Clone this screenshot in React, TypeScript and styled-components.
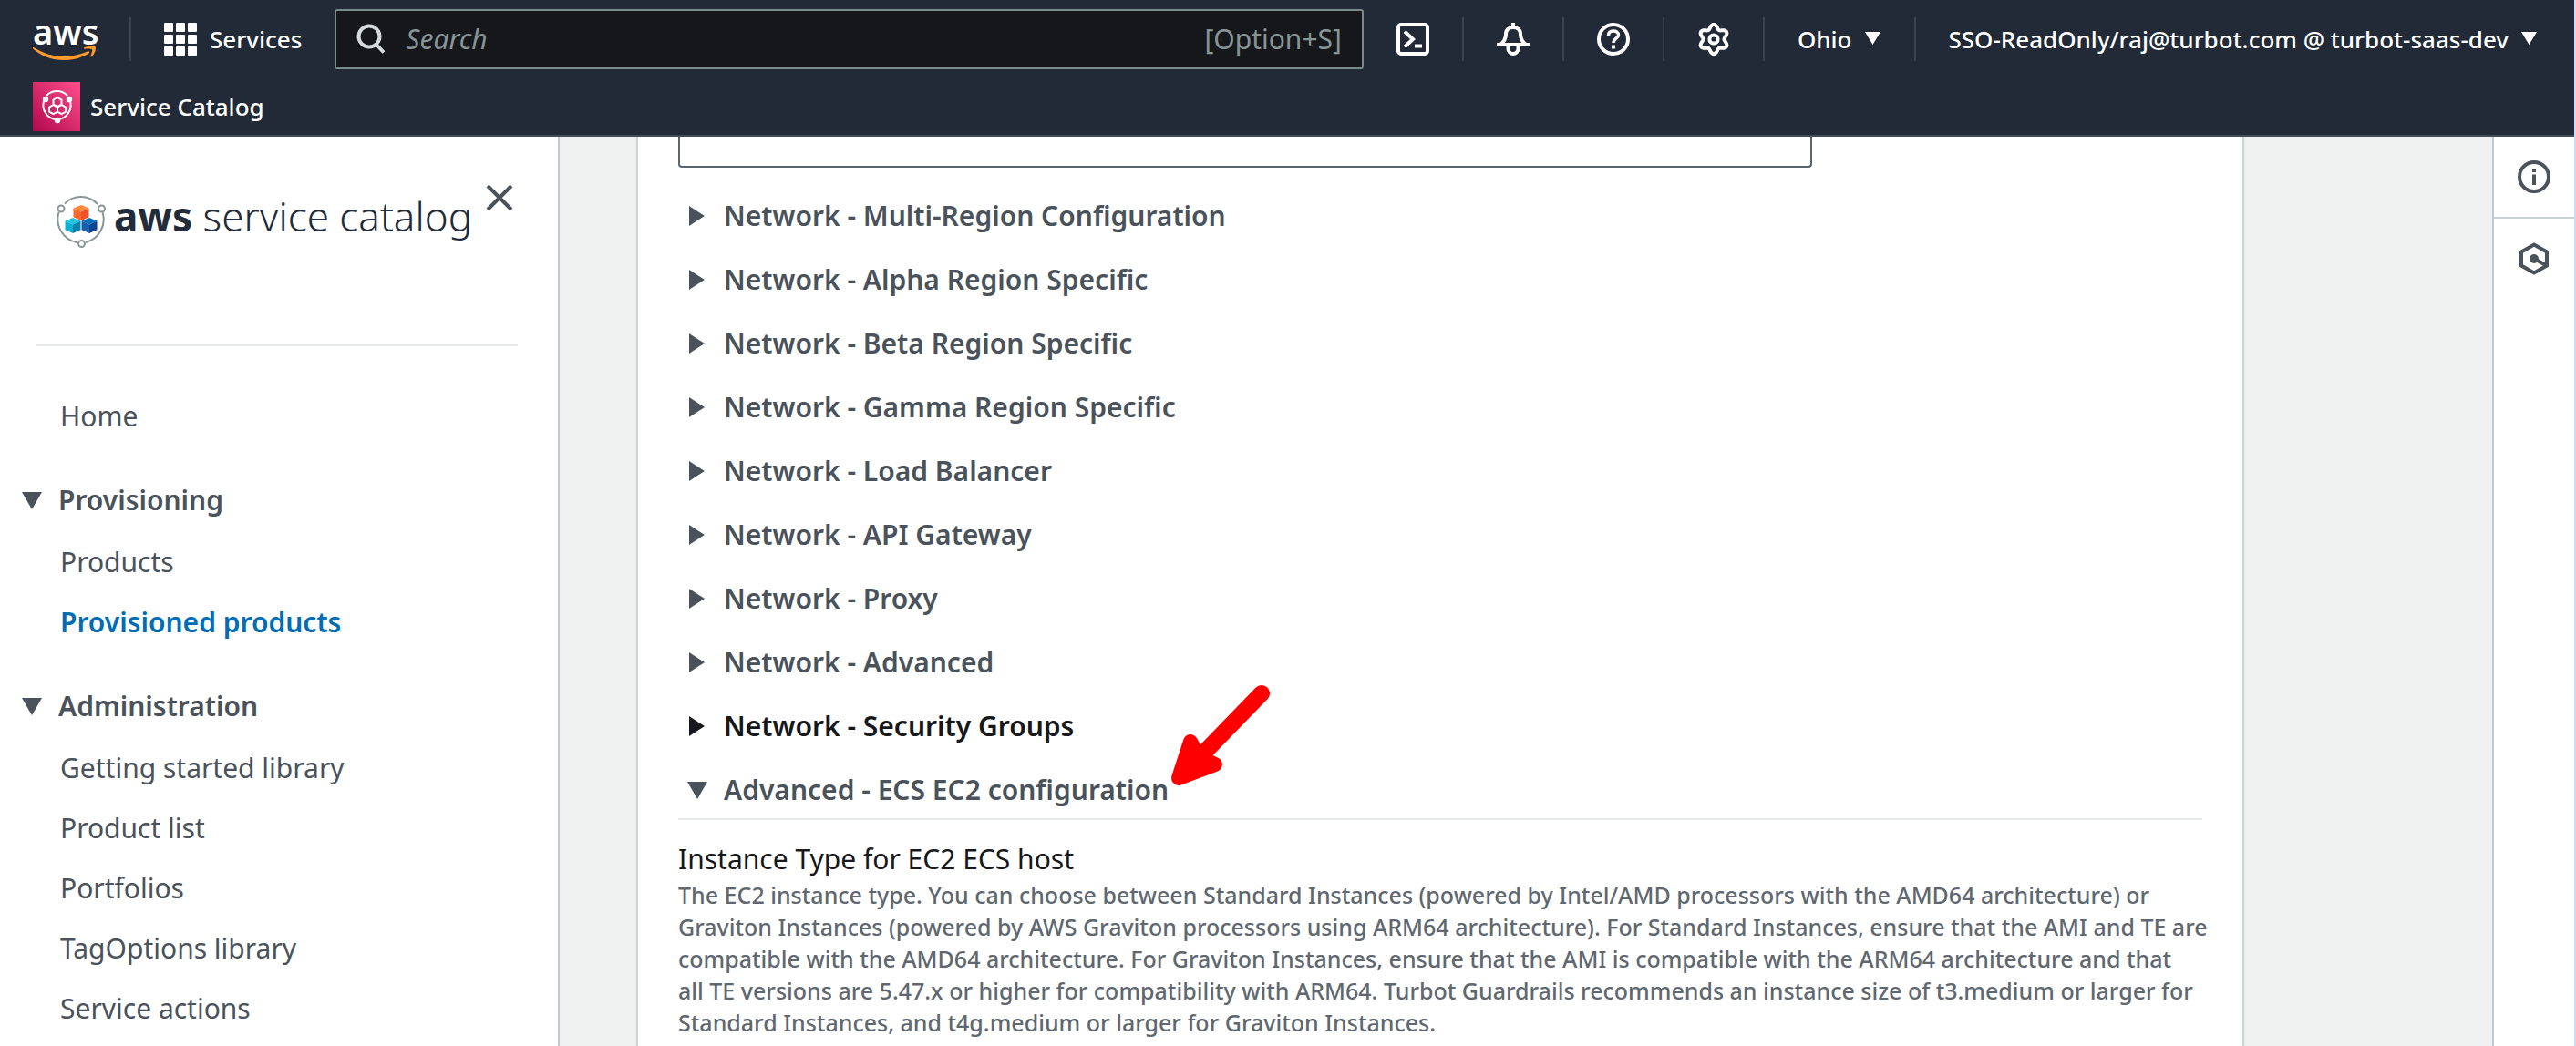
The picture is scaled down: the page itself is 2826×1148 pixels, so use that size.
import React, { useState } from 'react';
import styled, { createGlobalStyle } from 'styled-components';

const font = '"Noto Sans", "Open Sans", sans-serif';

const GlobalStyle = createGlobalStyle`
  *, *::before, *::after { box-sizing: border-box; }
  body { margin: 0; background: #fff; font-family: ${font}; color: #17191c; }
  button, input { font: inherit; color: inherit; }
  button { background: none; border: 0; padding: 0; margin: 0; cursor: pointer; text-align: left; white-space: nowrap; }
  a { color: inherit; text-decoration: none; white-space: nowrap; }
  svg { display: block; flex: none; }
`;

const Page = styled.div`
  min-height: 100vh;
  display: flex;
  flex-direction: column;
  border-right: 2px solid #ccdafb;
`;

/* ---------- top navigation ---------- */

const Header = styled.header`
  background: #212a36;
  border-bottom: 2px solid #444c56;
  color: #fff;
  font-size: 26px;
  line-height: 36px;
  font-weight: 500;
`;

const NavRow = styled.div`
  display: flex;
  align-items: center;
  gap: 36px;
  height: 86px;
  padding: 0 40px 0 36px;
`;

const Divider = styled.span`
  flex: none;
  width: 2px;
  height: 48px;
  background: #3b424b;
`;

const NavButton = styled.button`
  display: flex;
  align-items: center;
  gap: 14px;
`;

const SearchBox = styled.label`
  flex: 1;
  min-width: 0;
  display: flex;
  align-items: center;
  gap: 22px;
  height: 66px;
  padding: 0 22px;
  background: #16171b;
  border: 2px solid #7b8a8b;
  border-radius: 3px;
  font-size: 30px;
  line-height: 40px;
  font-weight: 400;
  color: #879596;
`;

const SearchInput = styled.input`
  flex: 1;
  min-width: 0;
  padding: 0;
  border: 0;
  outline: 0;
  background: transparent;
  font-style: italic;
  &::placeholder { color: #879596; opacity: 1; }
`;

const FavoritesRow = styled.div`
  display: flex;
  align-items: center;
  height: 62px;
  padding: 0 36px;
`;

const FavoriteLink = styled.a`
  display: flex;
  align-items: center;
  gap: 11px;
`;

/* ---------- page body ---------- */

const Body = styled.div`
  flex: 1;
  display: flex;
  background: #eff1f0;
`;

const Sidebar = styled.nav`
  flex: none;
  width: 614px;
  background: #fff;
  border-right: 2px solid #c3cacd;
  color: #4a525b;
  font-size: 30px;
  line-height: 40px;
`;

const Brand = styled.div`
  display: flex;
  align-items: flex-start;
  justify-content: space-between;
  height: 230px;
  margin: 0 44px 0 40px;
  padding: 52px 5px 0 22px;
  border-bottom: 2px solid #e5e8e8;
`;

const BrandLink = styled.a`
  display: flex;
  align-items: flex-start;
  gap: 8px;
  padding-top: 6px;
  color: #222b39;
  font-size: 44px;
  line-height: 58px;
  font-weight: 300;
  strong { font-weight: 700; }
  svg { margin-top: 7px; }
`;

const NavBody = styled.div`
  display: flex;
  flex-direction: column;
  gap: 52px;
  padding: 57px 24px 21px;
`;

const NavHeading = styled.button`
  display: flex;
  align-items: center;
  gap: 18px;
  font-weight: 600;
`;

const NavList = styled.ul`
  display: flex;
  flex-direction: column;
  gap: 26px;
  margin: 28px 0 0;
  padding: 0 0 0 42px;
  list-style: none;
`;

const NavLink = styled.a`
  display: block;
  color: ${({ $active }: { $active?: boolean }) => ($active ? '#006db4' : 'inherit')};
  font-weight: ${({ $active }: { $active?: boolean }) => ($active ? 600 : 400)};
`;

const HomeLink = styled(NavLink)`
  padding-left: 42px;
`;

const Main = styled.main`
  flex: 1;
  min-width: 0;
  padding: 0 84px;
`;

const Card = styled.section`
  max-width: 1764px;
  min-height: 100%;
  padding: 0 44px 6px;
  background: #fff;
  border: 2px solid #cdd2d3;
  border-width: 0 2px;
`;

const TextField = styled.input`
  display: block;
  width: 100%;
  max-width: 1244px;
  height: 34px;
  padding: 0 20px;
  background: #fff;
  border: 2px solid #5b656f;
  border-top: 0;
  border-radius: 0 0 4px 4px;
`;

const Groups = styled.div`
  display: flex;
  flex-direction: column;
  gap: 30px;
  padding: 33px 0 11px;
  border-bottom: 2px solid #e4e8e8;
`;

const GroupToggle = styled.button`
  display: flex;
  align-items: center;
  gap: 18px;
  padding-left: 10px;
  color: ${({ $focus }: { $focus?: boolean }) => ($focus ? '#16181c' : '#4a525b')};
  font-size: 30px;
  line-height: 40px;
  font-weight: 600;
`;

const GroupLabel = styled.span`
  position: relative;
`;

const Pointer = styled.svg`
  position: absolute;
  left: 100%;
  bottom: 12px;
  pointer-events: none;
`;

const FieldTitle = styled.h3`
  margin: 23px 0 2px;
  font-size: 30px;
  line-height: 40px;
  font-weight: 400;
  color: #16181c;
`;

const FieldHelp = styled.p`
  margin: 0;
  font-size: 25px;
  line-height: 35px;
  font-weight: 500;
  color: #5f6870;
  br { display: none; }
  @media (min-width: 2640px) {
    white-space: nowrap;
    br { display: inline; }
  }
`;

const ToolRail = styled.aside`
  flex: none;
  width: 90px;
  background: #fff;
  border-left: 2px solid #c3cacd;
`;

const ToolButton = styled.button`
  box-sizing: content-box;
  display: flex;
  width: 100%;
  height: 88px;
  align-items: center;
  justify-content: center;
  border-bottom: ${({ $last }: { $last?: boolean }) => ($last ? '0' : '2px solid #ccd2d3')};
  color: #4a525b;
`;

/* ---------- drawings ---------- */

const Triangle = ({ open }: { open: boolean }) => (
  <svg width="22" height="22" viewBox="0 0 22 22" fill="currentColor" aria-hidden="true">
    {open ? <path d="M0 2h22L11 21z" /> : <path d="M2 0v22l17-11z" />}
  </svg>
);

const Caret = () => (
  <svg width="18" height="16" viewBox="0 0 18 16" fill="currentColor" aria-hidden="true">
    <path d="M0 0h17L8.500 14z" />
  </svg>
);

const Logo = styled.a`
  display: grid;
  width: 70px;
  height: 50px;
  font-size: 38px;
  line-height: 32px;
  font-weight: 600;
  text-align: center;
`;

const Smile = () => (
  <svg width="70" height="16" viewBox="0 28 70 16" aria-hidden="true">
    <path d="M1 29c10 6.500 21 10 33 10 9 0 18-2 26-5.500 2-.8 3 .8 1.500 2C54 40.500 44 43 34 43 21 43 9 38.500 0 30.500c-.8-.8-.2-2 1-1.500z" fill="#ff9a2e" />
    <path d="M56 29.500c3.500-2 11-2.500 12.500-1.200 1.500 1.500-.5 8-4 11-.8.600-1.500.2-1.200-.6 1-2.500 2.500-6.500 1.700-7.500s-5.500-.8-8-.5c-1.200.1-1.500-.8-1-1.200z" fill="#ff9a2e" />
  </svg>
);

const GridIcon = () => (
  <svg width="36" height="36" viewBox="0 0 36 36" fill="#fff" aria-hidden="true">
    {[0, 13, 26].map((y) => [0, 13, 26].map((x) => <rect key={`${x}-${y}`} x={x} y={y} width="10" height="10" rx="1" />))}
  </svg>
);

const SearchIcon = () => (
  <svg width="32" height="34" viewBox="0 0 32 34" fill="none" stroke="#d5dbdb" strokeWidth="4" aria-hidden="true">
    <circle cx="14" cy="14" r="11.500" />
    <path d="M21.500 22.500l8.500 9" />
  </svg>
);

const CloudShellIcon = () => (
  <svg width="36" height="36" viewBox="0 0 36 36" fill="none" stroke="#fff" strokeWidth="4" aria-hidden="true">
    <rect x="2" y="2" width="32" height="32" rx="3" />
    <path d="M9 9.500l9 8.500-9 8.500" />
    <path d="M20 25.500h8" />
  </svg>
);

const BellIcon = () => (
  <svg width="36" height="36" viewBox="0 0 36 36" fill="none" stroke="#fff" strokeWidth="4" aria-hidden="true">
    <path d="M18 0v5" />
    <path d="M4 24c4.500-3.500 6-7 6-11.500C10 7.500 13.500 5 18 5s8 2.500 8 7.500c0 4.500 1.500 8 6 11.500z" strokeLinejoin="round" />
    <path d="M0 24h36" />
    <path d="M12.500 25v3.500a5.500 5.500 0 0 0 11 0V25" />
  </svg>
);

const HelpIcon = () => (
  <svg width="36" height="36" viewBox="0 0 36 36" fill="none" stroke="#fff" strokeWidth="4" aria-hidden="true">
    <circle cx="18" cy="18" r="16" />
    <path d="M12.500 14c0-3.500 2.500-5 5.500-5s5.500 1.500 5.500 4.500c0 3.500-5.500 4-5.500 8.500" strokeWidth="3.500" />
    <path d="M18 24.500v4" />
  </svg>
);

const gearOutline = Array.from({ length: 72 }, (_, i) => {
  const angle = (i * 5 * Math.PI) / 180;
  const radius = 13.8 + 2.4 * Math.cos(6 * angle);
  return `${(18 + radius * Math.sin(angle)).toFixed(2)},${(18 - radius * Math.cos(angle)).toFixed(2)}`;
}).join(' ');

const GearIcon = () => (
  <svg width="36" height="36" viewBox="0 0 36 36" fill="none" stroke="#fff" strokeWidth="4" strokeLinejoin="round" aria-hidden="true">
    <polygon points={gearOutline} />
    <circle cx="18" cy="18" r="4.600" />
  </svg>
);

const CatalogTile = () => (
  <svg width="52" height="54" viewBox="0 0 52 54" fill="none" stroke="#fff" strokeWidth="2" aria-hidden="true">
    <defs>
      <linearGradient id="tile" x1="0" y1="1" x2="1" y2="0">
        <stop offset="0" stopColor="#b0084d" />
        <stop offset="1" stopColor="#ff4f8b" />
      </linearGradient>
    </defs>
    <rect width="52" height="54" fill="url(#tile)" stroke="none" />
    <path d="M15 15a16 16 0 0 1 23 0M12 21a16 16 0 0 0 12 20M41 21a16 16 0 0 1-12 20" />
    <g fill="#fff" stroke="none">
      <circle cx="14" cy="19" r="3.200" />
      <circle cx="40" cy="19" r="3.200" />
      <circle cx="27" cy="42" r="3.200" />
    </g>
    <path d="M27 17l4.500 2.600v5L27 27.200l-4.500-2.600v-5zM22.500 25l4.500 2.600v5l-4.500 2.600-4.500-2.600v-5zM31.500 25l4.500 2.600v5l-4.500 2.600-4.500-2.600v-5z" strokeLinejoin="round" />
  </svg>
);

const Cube = ({ x, y, top, left, right }: { x: number; y: number; top: string; left: string; right: string }) => (
  <g transform={`translate(${x} ${y})`}>
    <path d="M0-8.500l8.500 3.500L0-1-8.500-5z" fill={top} />
    <path d="M-8.500-5L0-1v9.500l-8.500-3.800z" fill={left} />
    <path d="M8.500-5L0-1v9.500l8.500-3.800z" fill={right} />
  </g>
);

const CatalogLogo = () => (
  <svg width="55" height="57" viewBox="0 0 55 57" fill="none" aria-hidden="true">
    <g stroke="#8a9698" strokeWidth="2">
      <path d="M9 8.500A25 25 0 0 1 45 9M50.500 18a26 26 0 0 1-18.500 33M22 51A26 26 0 0 1 2.500 18" />
      <circle cx="5" cy="14" r="3.500" />
      <circle cx="49.500" cy="14" r="3.500" />
      <circle cx="27.500" cy="52.500" r="3.500" />
    </g>
    <Cube x={27} y={18.500} top="#ff8a3c" left="#ff6a2b" right="#f0502b" />
    <Cube x={18} y={32.500} top="#20c4dc" left="#0fb0cf" right="#0785b0" />
    <Cube x={36} y={32.500} top="#0a6fb8" left="#1560ae" right="#0d4593" />
  </svg>
);

const CloseIcon = () => (
  <svg width="30" height="30" viewBox="0 0 30 30" fill="none" stroke="#4a525b" strokeWidth="4" aria-hidden="true">
    <path d="M2 2l26 26M28 2L2 28" />
  </svg>
);

const InfoIcon = () => (
  <svg width="36" height="36" viewBox="0 0 36 36" fill="none" stroke="currentColor" strokeWidth="4" aria-hidden="true">
    <circle cx="18" cy="18" r="16" />
    <path d="M18 9v4M18 15.500V27" />
  </svg>
);

const HexIcon = () => (
  <svg width="36" height="36" viewBox="0 0 36 36" fill="none" stroke="currentColor" strokeWidth="4" aria-hidden="true">
    <path d="M18 2.500l14 8v15l-14 8-14-8v-15z" />
    <circle cx="18" cy="18" r="5" fill="currentColor" stroke="none" />
    <path d="M18 18l13 7" />
  </svg>
);

const RedArrow = () => (
  <Pointer
    width="112"
    height="128"
    viewBox="0 0 112 128"
    fill="#f00"
    stroke="#f00"
    strokeLinecap="round"
    strokeLinejoin="round"
    aria-hidden="true"
  >
    <path d="M102 14L38 80" strokeWidth="18" />
    <path d="M11 107L24 67l7 13 7 6 13 6z" strokeWidth="16" />
  </Pointer>
);

/* ---------- content ---------- */

const sections = [
  { title: 'Provisioning', links: ['Products', 'Provisioned products'] },
  {
    title: 'Administration',
    links: ['Getting started library', 'Product list', 'Portfolios', 'TagOptions library', 'Service actions'],
  },
];

const groups = [
  'Network - Multi-Region Configuration',
  'Network - Alpha Region Specific',
  'Network - Beta Region Specific',
  'Network - Gamma Region Specific',
  'Network - Load Balancer',
  'Network - API Gateway',
  'Network - Proxy',
  'Network - Advanced',
  'Network - Security Groups',
  'Advanced - ECS EC2 configuration',
];

export default function App() {
  const [current, setCurrent] = useState('Provisioned products');

  return (
    <>
      <GlobalStyle />
      <Page>
        <Header>
          <NavRow>
            <Logo href="#aws">aws<Smile /></Logo>
            <Divider />
            <NavButton><GridIcon />Services</NavButton>
            <SearchBox>
              <SearchIcon />
              <SearchInput type="search" placeholder="Search" aria-label="Search" />
              <span>[Option+S]</span>
            </SearchBox>
            <NavButton aria-label="CloudShell"><CloudShellIcon /></NavButton>
            <Divider />
            <NavButton aria-label="Notifications"><BellIcon /></NavButton>
            <Divider />
            <NavButton aria-label="Help"><HelpIcon /></NavButton>
            <Divider />
            <NavButton aria-label="Settings"><GearIcon /></NavButton>
            <Divider />
            <NavButton>Ohio<Caret /></NavButton>
            <Divider />
            <NavButton>SSO-ReadOnly/raj@turbot.com @ turbot-saas-dev<Caret /></NavButton>
          </NavRow>
          <FavoritesRow>
            <FavoriteLink href="#service-catalog"><CatalogTile />Service Catalog</FavoriteLink>
          </FavoritesRow>
        </Header>

        <Body>
          <Sidebar aria-label="Service Catalog">
            <Brand>
              <BrandLink href="#service-catalog">
                <CatalogLogo />
                <span><strong>aws</strong> service catalog</span>
              </BrandLink>
              <button aria-label="Close navigation"><CloseIcon /></button>
            </Brand>
            <NavBody>
              <HomeLink href="#home">Home</HomeLink>
              {sections.map((section) => (
                <div key={section.title}>
                  <NavHeading aria-expanded="true"><Triangle open />{section.title}</NavHeading>
                  <NavList>
                    {section.links.map((link) => (
                      <li key={link}>
                        <NavLink href="#list" $active={link === current} onClick={() => setCurrent(link)}>{link}</NavLink>
                      </li>
                    ))}
                  </NavList>
                </div>
              ))}
            </NavBody>
          </Sidebar>

          <Main>
            <Card>
              <TextField type="text" aria-label="Parameter value" />
              <Groups>
                {groups.map((name) => {
                  const open = name.startsWith('Advanced');
                  return (
                    <GroupToggle key={name} aria-expanded={open} $focus={name.endsWith('Security Groups')}>
                      <Triangle open={open} />
                      <GroupLabel>
                        {name}
                        {open && <RedArrow />}
                      </GroupLabel>
                    </GroupToggle>
                  );
                })}
              </Groups>
              <FieldTitle>Instance Type for EC2 ECS host</FieldTitle>
              <FieldHelp>
                The EC2 instance type. You can choose between Standard Instances (powered by Intel/AMD processors with
                the AMD64 architecture) or <br />
                Graviton Instances (powered by AWS Graviton processors using ARM64 architecture). For Standard
                Instances, ensure that the AMI and TE are <br />
                compatible with the AMD64 architecture. For Graviton Instances, ensure that the AMI is compatible with
                the ARM64 architecture and that <br />
                all TE versions are 5.47.x or higher for compatibility with ARM64. Turbot Guardrails recommends an
                instance size of t3.medium or larger for <br />
                Standard Instances, and t4g.medium or larger for Graviton Instances.
              </FieldHelp>
            </Card>
          </Main>

          <ToolRail aria-label="Tools">
            <ToolButton aria-label="Info"><InfoIcon /></ToolButton>
            <ToolButton aria-label="Resources" $last><HexIcon /></ToolButton>
          </ToolRail>
        </Body>
      </Page>
    </>
  );
}
